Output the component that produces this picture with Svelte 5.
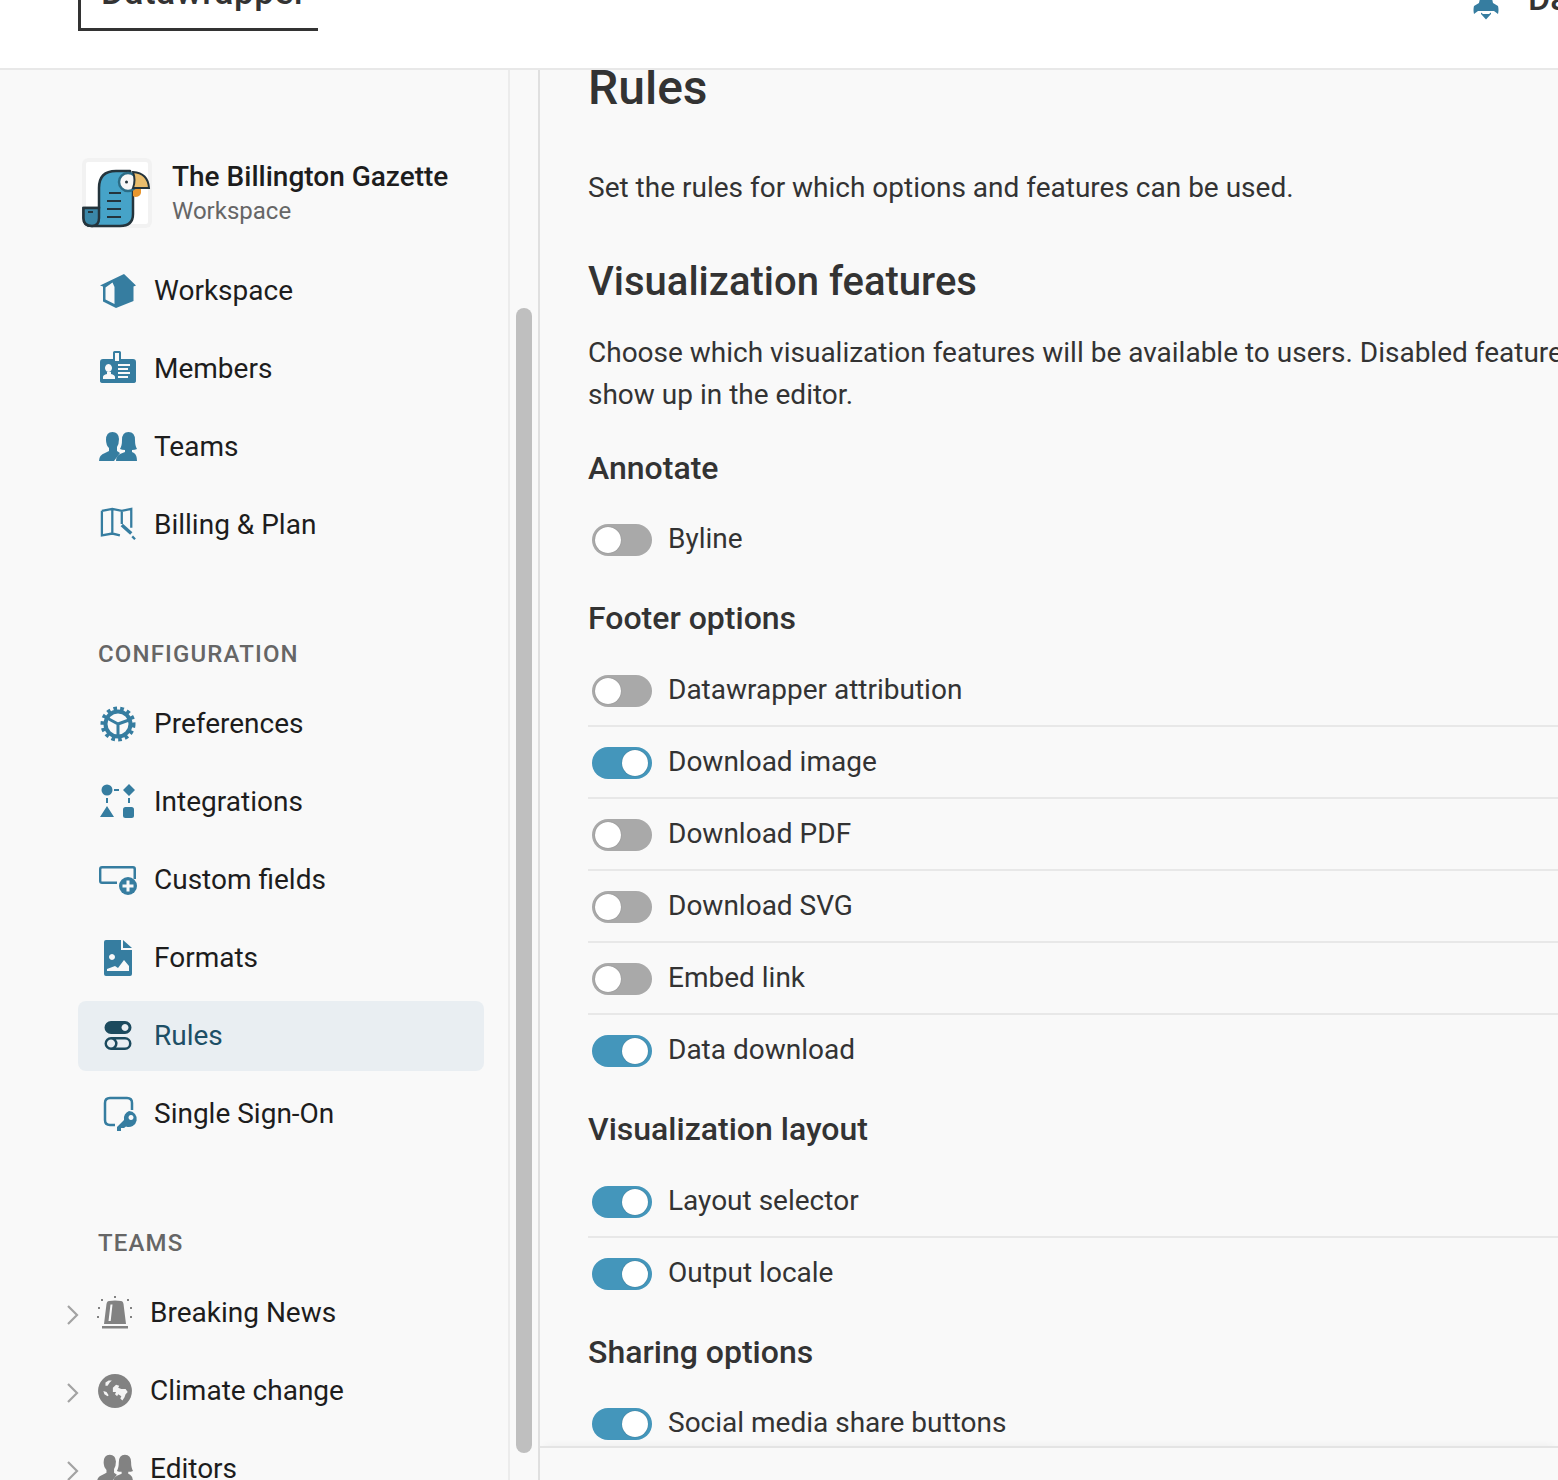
<script>
  const I = {
    workspace: `<svg viewBox="0 0 36 36" fill="currentColor"><path fill-rule="evenodd" d="M0 12.500 24 1l12 11.500-2.500 1V28L16 35 3 28.500V13.500ZM5.500 14.500V26.500L14.500 31V14L12.500 9.500Z"/></svg>`,
    members: `<svg viewBox="0 0 36 36" fill="currentColor"><path fill-rule="evenodd" d="M3 8h10V1.500Q13 0 14.500 0h5Q21 0 21 1.500V8h12q3 0 3 3v19q0 2-3 2H3q-3 0-3-2V11q0-3 3-3ZM15 2v8h4V2ZM8.500 13a3.500 4 0 1 0 .01 0ZM3 28h12v-2q-.2-2-4-3v-2H7v2q-4 1-4 3ZM18 13h12v2H18Zm0 4h10v2H18Zm0 4h12v2H18Zm0 4h10v2H18Z"/></svg>`,
    teams: `<svg viewBox="0 0 38 32" fill="currentColor"><path d="M0 30q0-6 6-8l4-2v-3q-3-3-3-8 0-8 6.500-8 6 0 6.500 7 0 5-2 8v4l3 2-6 8H0Z"/><path d="M17 30q0-5 4-7l5-2v-2q-3 0-5-1 2-3 2-9 0-8 6.500-8T36 9q0 6 2 9-2 1-5 1v2l2 1q3 2 3 8Z"/></svg>`,
    billing: `<svg viewBox="0 0 38 38" fill="none" stroke="currentColor" stroke-width="2.400"><path d="M2 4 13 2l10 2 10-2v20M2 4v26l11-2 8 2M13 2v26M23 4v14"/><path d="M23 19l10 9" stroke-width="3.600"/><path d="M34 31l3 3" stroke-width="2.400"/></svg>`,
    prefs: `<svg viewBox="0 0 36 36" fill="none" stroke="currentColor"><circle cx="18" cy="18" r="12.500" stroke-width="4"/><circle cx="18" cy="18" r="15.500" stroke-width="4" stroke-dasharray="3.600 3.200"/><path d="M18 18 7 12M18 18 29 14M18 18V30" stroke-width="3"/></svg>`,
    integrations: `<svg viewBox="0 0 36 36" fill="currentColor"><circle cx="7" cy="6" r="5.500"/><path d="M29 0l6 6-6 6-6-6ZM7 22l7 11H0Z"/><rect x="23" y="23" width="11" height="11" rx="2.500"/><path d="M14 5h5v2h-5ZM6 14h2v5H6ZM28 14h2v5h-2Z"/></svg>`,
    custom: `<svg viewBox="0 0 38 30" fill="currentColor"><path d="M3 1h31q3 0 3 3v10h-2.500V4q0-.6-.5-.6H3q-.600 0-.6.600v12q0 .600.600.600h15V19H3q-3 0-3-3V4q0-3 3-3Z"/><circle cx="29" cy="21" r="9"/><path fill="#f9f9f9" d="M27.500 15.500h3v4h4v3h-4v4h-3v-4h-4v-3h4Z"/></svg>`,
    formats: `<svg viewBox="0 0 28 36" fill="currentColor"><path fill-rule="evenodd" d="M2 0h15v10h11v24q0 2-2 2H2q-2 0-2-2V2q0-2 2-2ZM19 0l9 8h-9ZM8 14a3 3 0 1 0 .01 0ZM3 31h22v-5l-5-6-6 8-3-2-8 3Z"/></svg>`,
    rules: `<svg viewBox="0 0 28 30" fill="currentColor"><path fill-rule="evenodd" d="M7 0h14a6.500 6.500 0 0 1 0 13H7A6.500 6.500 0 0 1 7 0Zm14 3a3.500 3.500 0 1 0 .01 0Z"/><path fill-rule="evenodd" d="M7 16h14a6.500 6.500 0 0 1 0 13H7a6.500 6.500 0 0 1 0-13Zm0 2.500a4 4 0 1 0 .01 0ZM12 18.500a6.500 6.500 0 0 1 0 8H21a4 4 0 0 0 0-8Z"/></svg>`,
    sso: `<svg viewBox="0 0 36 36" fill="none"><path d="M12 29H7q-5 0-5-5V7q0-5 5-5h17q5 0 5 5v7" stroke="currentColor" stroke-width="2.500"/><path fill="currentColor" fill-rule="evenodd" d="M26 15a8 8 0 1 1-3 15.500L21 32h-3v3h-4v-4l7-7A8 8 0 0 1 26 15Zm2 4a2.500 2.500 0 1 0 .01 0Z"/></svg>`,
    siren: `<svg viewBox="0 0 36 34" fill="currentColor"><path fill-rule="evenodd" d="M12 5Q18 4 24 5q2 0 2.500 3L29 28H7L9.500 8Q10 5 12 5ZM13.500 8.500 11.500 25h2.200L15.500 8.500Z"/><path d="M5 30h26v2.400H5ZM17 0h2v2h-2ZM4 3h2v2H4ZM30 3h2v2h-2ZM1 11h2v2H1ZM33 11h2v2h-2ZM0 20h2v2H0ZM33 20h2v2h-2Z"/></svg>`,
    globe: `<svg viewBox="0 0 34 34"><circle cx="17" cy="17" r="16" fill="currentColor"/><path fill="#f4f4f4" d="M8 9l3-2 3 0-2 2-2 3-2 0ZM15 14l3-3 3 1-1 2 3 1 4 0 2 3-2 2-1 3-2 3-2-2 1-2-3-2-1 2-2-2 1-2-3 0ZM6 17l3 1 2 3-1 1-3-2Z"/></svg>`,
    editors: `<svg viewBox="0 0 38 32" fill="currentColor"><path d="M0 30q0-6 6-8l4-2v-3q-3-3-3-8 0-8 6.500-8 6 0 6.500 7 0 5-2 8v4l3 2-6 8H0Z"/><path d="M17 30q0-5 4-7l5-2v-2q-3 0-5-1 2-3 2-9 0-8 6.500-8T36 9q0 6 2 9-2 1-5 1v2l2 1q3 2 3 8Z"/></svg>`
  };
  const main = [
    { label: 'Workspace', icon: I.workspace, cls: 'w36' },
    { label: 'Members', icon: I.members, cls: 'w36' },
    { label: 'Teams', icon: I.teams, cls: 'w38' },
    { label: 'Billing & Plan', icon: I.billing, cls: 'w38' }
  ];
  const config = [
    { label: 'Preferences', icon: I.prefs, cls: 'w36' },
    { label: 'Integrations', icon: I.integrations, cls: 'w36' },
    { label: 'Custom fields', icon: I.custom, cls: 'w38' },
    { label: 'Formats', icon: I.formats, cls: 'w36' },
    { label: 'Rules', icon: I.rules, cls: 'small', active: true },
    { label: 'Single Sign-On', icon: I.sso, cls: 'shift' }
  ];
  const teams = [
    { label: 'Breaking News', icon: I.siren },
    { label: 'Climate change', icon: I.globe },
    { label: 'Editors', icon: I.editors }
  ];
  const groups = [
    { title: 'Annotate', rows: [['Byline', false]] },
    { title: 'Footer options', rows: [['Datawrapper attribution', false], ['Download image', true], ['Download PDF', false], ['Download SVG', false], ['Embed link', false], ['Data download', true]] },
    { title: 'Visualization layout', rows: [['Layout selector', true], ['Output locale', true]] },
    { title: 'Sharing options', rows: [['Social media share buttons', true]] }
  ];
</script>

<div class="page">
  <header>
    <div class="logo">Datawrapper</div>
    <div class="user">
      <svg class="rocket" viewBox="0 0 26 20" fill="currentColor"><path d="M8-6H18L20 3 25 6Q26 10 25 14L21 11H5L1 14Q0 10 1 6L6 3Z"/><path d="M8 12.500l2 1.500h6l2-1.500v1.500l-5 5.500-5-5.500Z"/></svg>
      <span class="uname">Datawrapper</span>
    </div>
  </header>

  <div class="body">
    <aside>
      <div class="org">
        <div class="org-logo">
          <svg viewBox="0 0 70 70" width="70" height="70">
            <path d="M17 50V30Q17 13 34 13H48L51 30V56Q51 68 38 68H10Q1.500 68 1.500 60V50Z" fill="#46a3c8" stroke="#24343c" stroke-width="2.500" stroke-linejoin="round"/>
            <path d="M1.500 50H17V60Q17 68 10 68Q1.500 68 1.500 60Z" fill="#3a87a8" stroke="#24343c" stroke-width="2.500"/>
            <path d="M6 54h5" stroke="#24343c" stroke-width="2"/>
            <path d="M51 31H59V35Q58 39 53 39L51 38Z" fill="#e8962e"/>
            <circle cx="46" cy="24" r="9" fill="#f7f7f7" stroke="#2b6c86" stroke-width="2.500"/>
            <path d="M51 30H67Q66 15 51 14Q54 22 51 30Z" fill="#e9bd6d" stroke="#24343c" stroke-width="2"/>
            <circle cx="44.500" cy="24" r="1.500" fill="#24343c"/>
            <path d="M27 35h12M25 43h14M25 51h14M25 59h14" stroke="#24343c" stroke-width="2"/>
          </svg>
        </div>
        <div class="org-text">
          <div class="org-name">The Billington Gazette</div>
          <div class="org-sub">Workspace</div>
        </div>
      </div>

      <nav class="first">
        {#each main as item}
          <div class="item"><span class="ico {item.cls}">{@html item.icon}</span>{item.label}</div>
        {/each}
      </nav>

      <div class="section cfg">CONFIGURATION</div>
      <nav>
        {#each config as item}
          <div class="item" class:active={item.active}><span class="ico {item.cls}">{@html item.icon}</span>{item.label}</div>
        {/each}
      </nav>

      <div class="section tms">TEAMS</div>
      <nav>
        {#each teams as item}
          <div class="item team">
            <svg class="chev" viewBox="0 0 14 20" fill="none" stroke="#a3a3a3" stroke-width="2.200"><path d="M2 1l9 9-9 9"/></svg>
            <span class="ico grey">{@html item.icon}</span>{item.label}
          </div>
        {/each}
      </nav>
    </aside>

    <div class="track"><div class="thumb"></div></div>

    <main>
      <div class="scroll">
        <h1>Rules</h1>
        <p class="intro">Set the rules for which options and features can be used.</p>
        <h2>Visualization features</h2>
        <p class="desc">Choose which visualization features will be available to users. Disabled features won't<br />show up in the editor.</p>
        {#each groups as g}
          <section>
            <h3>{g.title}</h3>
            <div class="rows">
              {#each g.rows as r}
                <div class="row">
                  <span class="toggle" class:on={r[1]}><span class="knob"></span></span>
                  <span class="lbl">{r[0]}</span>
                </div>
              {/each}
            </div>
          </section>
        {/each}
      </div>
      <div class="foot"></div>
    </main>
  </div>
</div>

<style>
  :global(body) { margin: 0; background: #f9f9f9; }
  .page {
    width: 1558px; height: 1480px; overflow: hidden;
    font-family: Roboto, "Liberation Sans", sans-serif;
    font-size: 28px; color: #1d1d1d; background: #f9f9f9;
    display: flex; flex-direction: column;
  }
  header {
    height: 68px; flex: none; background: #fff; border-bottom: 2px solid #e8e8e8;
    display: flex; justify-content: space-between; overflow: hidden;
  }
  .logo {
    margin: -30px 0 0 78px; width: 217px; height: 58px;
    border-left: 3px solid #333; border-bottom: 3px solid #333;
    padding-left: 20px;
    font-size: 35px; font-weight: 500; color: #333; line-height: 46px; letter-spacing: .6px;
  }
  .user { width: 85px; display: flex; align-items: flex-start; flex: none; color: #367da0; }
  .rocket { width: 26px; height: 20px; flex: none; }
  .uname { margin: -22px 0 0 29px; font-size: 34px; font-weight: 500; color: #333; line-height: 40px; white-space: nowrap; }
  .body { flex: 1; display: flex; min-height: 0; }
  aside {
    width: 508px; flex: none; border-right: 2px solid #ececec;
    padding: 88px 0 0 0; overflow: hidden;
  }
  .org { display: flex; margin-left: 82px; height: 70px; align-items: center; }
  .org-logo {
    width: 70px; height: 70px; flex: none; box-sizing: border-box;
    background: #fff; border-radius: 6px;
    box-shadow: inset 0 0 0 4px #f2f2f2; line-height: 0;
  }
  .org-text { margin-left: 20px; }
  .org-name { font-size: 28px; font-weight: 500; line-height: 36px; color: #1d1d1d; }
  .org-sub { font-size: 24px; line-height: 32px; color: #666; }
  nav { display: flex; flex-direction: column; gap: 8px; margin: 0 24px 0 78px; }
  nav.first { margin-top: 28px; }
  .item {
    height: 70px; display: flex; align-items: center; border-radius: 8px;
    padding-left: 20px; line-height: 70px;
  }
  .item.active { background: #e9eef2; color: #1d4f66; }
  .item.active .ico { color: #1c4a5e; }
  .ico {
    width: 40px; margin: 0 16px 0 0; display: flex; justify-content: center; color: #367da0; flex: none;
  }
  .ico :global(svg) { width: 36px; height: 36px; display: block; }
  .ico.w38 :global(svg) { width: 38px; }
  .ico.small :global(svg) { width: 28px; height: 30px; }
  .ico.shift :global(svg) { transform: translateX(3px); }
  .ico.grey { color: #828282; width: 36px; margin-right: 17px; }
  .item.team { margin-left: -14px; padding-left: 2px; }
  .chev { width: 14px; height: 20px; margin: 4px 17px 0 0; flex: none; }
  .section { font-size: 24px; font-weight: 500; letter-spacing: 1.15px; color: #666; line-height: 32px; margin-left: 98px; }
  .cfg { margin-top: 78px; margin-bottom: 19px; }
  .tms { margin-top: 78px; margin-bottom: 19px; }
  .track { width: 28px; flex: none; border-right: 2px solid #e0e0e0; }
  .thumb { width: 16px; height: 1145px; margin: 238px 0 0 6px; background: #bfbfbf; border-radius: 8px; }
  main { flex: 1; min-width: 0; display: flex; flex-direction: column; }
  .scroll { flex: 1; min-height: 0; overflow: hidden; padding-left: 48px; color: #333; }
  h1 { margin: -10px 0 0; font-size: 48px; font-weight: 500; line-height: 56px; color: #333; }
  .intro { margin: 51px 0 0; line-height: 42px; }
  h2 { margin: 49px 0 0; font-size: 40px; font-weight: 500; line-height: 48px; color: #333; }
  .desc { margin: 26px 0 0; line-height: 42px; white-space: nowrap; }
  section { margin-top: 22px; }
  section:first-of-type { margin-top: 32px; }
  h3 { margin: 0; font-size: 32px; font-weight: 500; line-height: 40px; color: #333; }
  .rows { margin-top: 17px; }
  section:first-of-type .rows, section:last-of-type .rows { margin-top: 16px; }
  .row {
    height: 72px; box-sizing: border-box; display: flex; align-items: center;
    border-bottom: 2px solid #e8e8e8; padding-left: 4px;
  }
  .row:last-child { border-bottom-color: transparent; }
  .toggle {
    width: 60px; height: 32px; border-radius: 16px; background: #a9a9a9; flex: none;
    display: flex; align-items: center; padding: 0 3px; box-sizing: border-box; margin-top: 2px;
  }
  .toggle.on { background: #4496bb; justify-content: flex-end; padding: 0 4px; }
  .knob { width: 26px; height: 26px; background: #fff; border-radius: 50%; box-shadow: 0 0 1px rgba(0,0,0,.4); }
  .lbl { margin: 0 0 2px 16px; }
  .foot { height: 32px; flex: none; border-top: 2px solid #e4e4e4; background: #f9f9f9; box-shadow: 0 -5px 8px -5px rgba(0,0,0,.06); }
</style>
